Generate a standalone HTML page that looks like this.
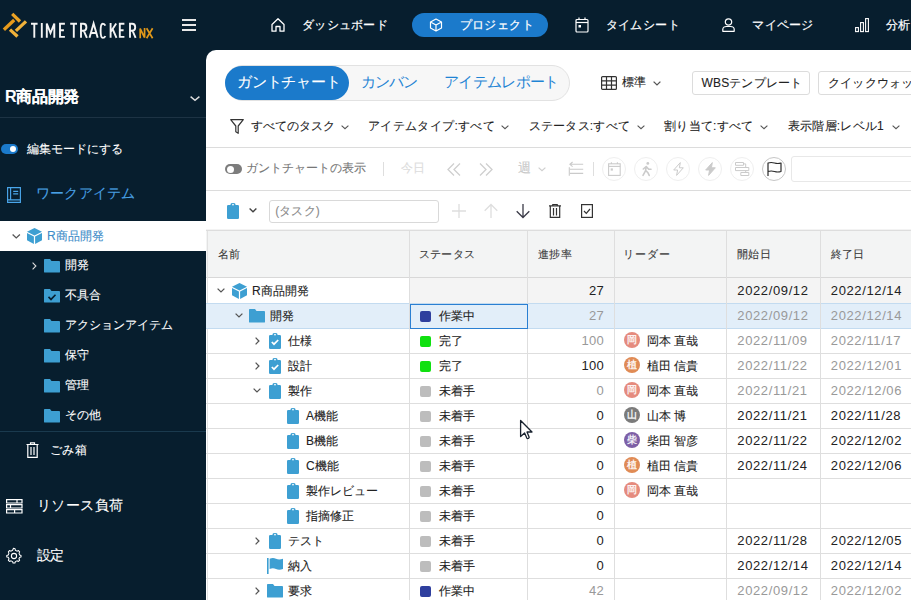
<!DOCTYPE html>
<html lang="ja">
<head>
<meta charset="utf-8">
<style>
*{box-sizing:border-box;margin:0;padding:0}
html,body{width:911px;height:600px;overflow:hidden;background:#071e2e;font-family:"Liberation Sans",sans-serif;color:#222}
.a{position:absolute;white-space:nowrap;line-height:20px;-webkit-text-stroke:0.1px currentColor}
svg{position:absolute;overflow:visible}
.b{position:absolute}
</style>
</head>
<body>

<svg style="left:0;top:0" width="160" height="45" viewBox="0 0 160 45">
<g stroke-width="3.3" stroke-linecap="butt">
<line x1="12.2" y1="13.9" x2="20.0" y2="21.5" stroke="#eba324"/>
<line x1="3.9" y1="29.7" x2="14.2" y2="20.0" stroke="#e69a1c"/>
<line x1="15.9" y1="30.9" x2="26.0" y2="21.4" stroke="#f0b23a"/>
<line x1="10.0" y1="29.6" x2="17.5" y2="36.5" stroke="#f0b23a"/>
</g>
<g fill="none" stroke="#f4f4f4" stroke-width="1.9" stroke-linejoin="miter">
<path d="M31 23.8 H37.6 M34.3 23.8 V37.8"/>
<path d="M41.8 23 V37.8"/>
<path d="M46.8 37.8 V23.6 L50.5 33 L54.3 23.6 V37.8"/>
<path d="M64.9 23.8 H60 V36.9 H64.9 M60 30.2 H63.9"/>
<path d="M70.2 23.8 H77 M73.8 23.8 V37.8"/>
<path d="M81 37.8 V23.8 H83.4 Q86.4 23.8 86.4 27.3 Q86.4 30.8 83.4 30.8 H81 M83.8 30.8 L86.9 37.8"/>
<path d="M89.5 37.8 L93.6 23.4 L97.7 37.8 M90.8 33 H96.4"/>
<path d="M105.3 25.6 Q104.6 23.7 102.8 23.7 Q100.6 23.7 100.6 30.8 Q100.6 37.9 102.8 37.9 Q104.6 37.9 105.3 36"/>
<path d="M110.6 23 V37.8 M116.2 23.4 L110.6 32 M112.6 29 L116.5 37.8"/>
<path d="M124.4 23.8 H119.8 V36.9 H124.4 M119.8 30.2 H123.6"/>
<path d="M130 37.8 V23.8 H132.2 Q135.2 23.8 135.2 27.3 Q135.2 30.8 132.2 30.8 H130 M132.6 30.8 L135.6 37.8"/>
</g>
<g fill="none" stroke="#e0981a" stroke-width="1.7">
<path d="M140.2 38.2 V28.6 L144.6 37.6 V28"/>
<path d="M146.6 28.2 L152.6 38.2 M152.6 28.2 L146.6 38.2"/>
</g>
</svg>
<div class="b" style="left:182px;top:19px;width:14px;height:2px;background:#e8e8e8"></div>
<div class="b" style="left:182px;top:24px;width:14px;height:2px;background:#e8e8e8"></div>
<div class="b" style="left:182px;top:29px;width:14px;height:2px;background:#e8e8e8"></div>
<svg style="left:271px;top:18px" width="14" height="14" viewBox="0 0 14 14"><path d="M1 6.5 L7 0.8 L13 6.5 V13.2 H9 V8.5 H5 V13.2 H1 Z" fill="none" stroke="#fff" stroke-width="1.3" stroke-linejoin="round"/></svg>
<div class="a" style="left:302.0px;top:15.3px;font-size:12px;color:#fff;letter-spacing:0.25px;font-weight:normal;-webkit-text-stroke:0.2px #fff">ダッシュボード</div>
<div class="b" style="left:412px;top:13px;width:136px;height:24px;border-radius:12px;background:#1b7acb"></div>
<svg style="left:429px;top:18px" width="14" height="14" viewBox="0 0 14 14"><path d="M7 1 L12.5 4 V10 L7 13 L1.5 10 V4 Z M1.5 4 L7 7 L12.5 4 M7 7 V13" fill="none" stroke="#fff" stroke-width="1.2" stroke-linejoin="round"/></svg>
<div class="a" style="left:459.5px;top:15.3px;font-size:12px;color:#fff;letter-spacing:0.45px;font-weight:normal;-webkit-text-stroke:0.2px #fff">プロジェクト</div>
<svg style="left:575px;top:17px" width="14" height="16" viewBox="0 0 14 16"><rect x="1" y="2.5" width="12" height="12.5" rx="1" fill="none" stroke="#fff" stroke-width="1.2"/><line x1="1" y1="5.5" x2="13" y2="5.5" stroke="#fff" stroke-width="1.2"/><line x1="4" y1="0.5" x2="4" y2="3" stroke="#fff" stroke-width="1.2"/><line x1="10" y1="0.5" x2="10" y2="3" stroke="#fff" stroke-width="1.2"/><rect x="3.5" y="8" width="2.5" height="2.5" fill="#fff"/></svg>
<div class="a" style="left:605.5px;top:15.3px;font-size:12px;color:#fff;letter-spacing:0.45px;font-weight:normal;-webkit-text-stroke:0.2px #fff">タイムシート</div>
<svg style="left:722px;top:18px" width="13" height="14" viewBox="0 0 13 14"><circle cx="6.5" cy="4" r="3.2" fill="none" stroke="#fff" stroke-width="1.2"/><path d="M0.8 13.3 V11.5 C0.8 9.5 2.5 8.5 4.5 8.5 H8.5 C10.5 8.5 12.2 9.5 12.2 11.5 V13.3 Z" fill="none" stroke="#fff" stroke-width="1.2" stroke-linejoin="round"/></svg>
<div class="a" style="left:752.3px;top:15.3px;font-size:12px;color:#fff;letter-spacing:0.3px;font-weight:normal;-webkit-text-stroke:0.2px #fff">マイページ</div>
<svg style="left:855px;top:18px" width="15" height="15" viewBox="0 0 15 15"><rect x="0.6" y="9.6" width="2.8" height="4" fill="none" stroke="#fff" stroke-width="1.1"/><rect x="5.6" y="4.6" width="2.8" height="9" fill="none" stroke="#fff" stroke-width="1.1"/><rect x="10.6" y="0.6" width="2.8" height="13" fill="none" stroke="#fff" stroke-width="1.1"/></svg>
<div class="a" style="left:886.0px;top:15.3px;font-size:12px;color:#fff;letter-spacing:0px;font-weight:normal;-webkit-text-stroke:0.2px #fff">分析</div>
<div class="a" style="left:5px;top:87px;font-size:16px;color:#fff;letter-spacing:-0.3px;font-weight:bold;">R商品開発</div>
<svg style="left:190px;top:95.5px" width="10" height="5" viewBox="0 0 10 5"><path d="M0.6 0.6 L5.0 4.4 L9.4 0.6" fill="none" stroke="#ddd" stroke-width="1.4"/></svg>
<div class="b" style="left:0;top:117px;width:206px;height:1px;background:#1d3344"></div>
<div class="b" style="left:1px;top:144px;width:17px;height:10px;border-radius:5px;background:#1b7acb"></div>
<div class="b" style="left:10px;top:146px;width:6px;height:6px;border-radius:3px;background:#fff"></div>
<div class="a" style="left:27px;top:138.6px;font-size:12px;color:#fff;letter-spacing:-0.05px;font-weight:normal;">編集モードにする</div>
<svg style="left:7px;top:187px" width="15" height="16" viewBox="0 0 15 16"><path d="M0.6 0.6 H13.4 V15.4 H0.6 Z M3.6 0.6 V12.8 M0.6 12.8 H13.4 M6.2 4.3 H11.2 M6.2 6.9 H11.2" fill="none" stroke="#4aa6ea" stroke-width="1.15"/></svg>
<div class="a" style="left:36px;top:183.2px;font-size:14px;color:#49a0e4;letter-spacing:0.2px;font-weight:normal;">ワークアイテム</div>
<div class="b" style="left:0;top:221px;width:206px;height:30px;background:#fff"></div>
<svg style="left:12px;top:234px" width="8.5" height="4.5" viewBox="0 0 8.5 4.5"><path d="M0.6 0.6 L4.25 3.9 L7.9 0.6" fill="none" stroke="#555" stroke-width="1.3"/></svg>
<svg style="left:26.5px;top:228px" width="15" height="16" viewBox="0 0 15 16"><path d="M7.5 0 L15 3.8 L7.5 7.6 L0 3.8 Z" fill="#3d9fd2"/><path d="M0 4.9 L6.9 8.5 V16 L0 12.3 Z" fill="#3d9fd2"/><path d="M15 4.9 L8.1 8.5 V16 L15 12.3 Z" fill="#3d9fd2"/></svg>
<div class="a" style="left:47px;top:226px;font-size:12px;color:#3d8cc8;letter-spacing:0.1px;font-weight:normal;">R商品開発</div>
<svg style="left:32px;top:262px" width="4.5" height="8" viewBox="0 0 4.5 8"><path d="M0.6 0.6 L3.9 4.0 L0.6 7.4" fill="none" stroke="#ddd" stroke-width="1.1"/></svg>
<svg style="left:44px;top:258.5px" width="16" height="13.6" viewBox="0 0 16 13" preserveAspectRatio="none"><path d="M0 0.8 Q0 0 0.8 0 H6 L7.5 2 H15.2 Q16 2 16 2.8 V12.2 Q16 13 15.2 13 H0.8 Q0 13 0 12.2 Z" fill="#3d9fd2"/></svg>
<div class="a" style="left:65px;top:255px;font-size:12px;color:#fff;letter-spacing:0px;font-weight:normal;">開発</div>
<svg style="left:44px;top:288.5px" width="16" height="13.6" viewBox="0 0 16 13" preserveAspectRatio="none"><path d="M0 0.8 Q0 0 0.8 0 H6 L7.5 2 H15.2 Q16 2 16 2.8 V12.2 Q16 13 15.2 13 H0.8 Q0 13 0 12.2 Z" fill="#3d9fd2"/><path d="M4.5 7.5 L7 10 L11.5 5.5" fill="none" stroke="#071e2e" stroke-width="1.6"/></svg>
<div class="a" style="left:65px;top:285px;font-size:12px;color:#fff;letter-spacing:0px;font-weight:normal;">不具合</div>
<svg style="left:44px;top:318.5px" width="16" height="13.6" viewBox="0 0 16 13" preserveAspectRatio="none"><path d="M0 0.8 Q0 0 0.8 0 H6 L7.5 2 H15.2 Q16 2 16 2.8 V12.2 Q16 13 15.2 13 H0.8 Q0 13 0 12.2 Z" fill="#3d9fd2"/></svg>
<div class="a" style="left:65px;top:315px;font-size:12px;color:#fff;letter-spacing:0px;font-weight:normal;">アクションアイテム</div>
<svg style="left:44px;top:348.5px" width="16" height="13.6" viewBox="0 0 16 13" preserveAspectRatio="none"><path d="M0 0.8 Q0 0 0.8 0 H6 L7.5 2 H15.2 Q16 2 16 2.8 V12.2 Q16 13 15.2 13 H0.8 Q0 13 0 12.2 Z" fill="#3d9fd2"/></svg>
<div class="a" style="left:65px;top:345px;font-size:12px;color:#fff;letter-spacing:0px;font-weight:normal;">保守</div>
<svg style="left:44px;top:378.5px" width="16" height="13.6" viewBox="0 0 16 13" preserveAspectRatio="none"><path d="M0 0.8 Q0 0 0.8 0 H6 L7.5 2 H15.2 Q16 2 16 2.8 V12.2 Q16 13 15.2 13 H0.8 Q0 13 0 12.2 Z" fill="#3d9fd2"/></svg>
<div class="a" style="left:65px;top:375px;font-size:12px;color:#fff;letter-spacing:0px;font-weight:normal;">管理</div>
<svg style="left:44px;top:408.5px" width="16" height="13.6" viewBox="0 0 16 13" preserveAspectRatio="none"><path d="M0 0.8 Q0 0 0.8 0 H6 L7.5 2 H15.2 Q16 2 16 2.8 V12.2 Q16 13 15.2 13 H0.8 Q0 13 0 12.2 Z" fill="#3d9fd2"/></svg>
<div class="a" style="left:65px;top:405px;font-size:12px;color:#fff;letter-spacing:0px;font-weight:normal;">その他</div>
<div class="b" style="left:0;top:431px;width:206px;height:1px;background:#1a3a4e"></div>
<svg style="left:26px;top:442px" width="13" height="16" viewBox="0 0 13 16"><path d="M0.5 2.5 H12.5 M4.5 2.5 V0.8 H8.5 V2.5 M1.8 2.5 V15.3 H11.2 V2.5 M5 5 V13 M8 5 V13" fill="none" stroke="#fff" stroke-width="1.2"/></svg>
<div class="a" style="left:50px;top:439.5px;font-size:12px;color:#fff;letter-spacing:0.3px;font-weight:normal;">ごみ箱</div>
<svg style="left:5.5px;top:498.5px" width="17" height="15" viewBox="0 0 17 15"><path d="M0.6 0.6 H16 V4 H0.6 Z M11 0.6 V4 M0.6 5.6 H16 V9 H0.6 Z M4.5 5.6 V9 M0.6 10.6 H16 V14 H0.6 Z M8.6 10.6 V14" fill="none" stroke="#fff" stroke-width="1.2"/></svg>
<div class="a" style="left:36.5px;top:494.5px;font-size:14px;color:#fff;letter-spacing:0.5px;font-weight:normal;">リソース負荷</div>
<svg style="left:6px;top:548px" width="16" height="16" viewBox="0 0 16 16"><path d="M8 0.8 L9.6 1.2 L10 3 L11.6 3.9 L13.3 3.3 L14.5 4.6 L13.9 6.3 L14.6 8 L16 8.5 V10 L14.4 10.5 L13.8 12 L14.5 13.6 L13.2 14.8 L11.6 14.2 L10 15 L9.5 16.5 H7.5 L7 15 L5.4 14.2 L3.8 14.8 L2.5 13.6 L3.2 12 L2.5 10.5 L0.8 10 V8.5 L2.4 8 L3.1 6.3 L2.5 4.6 L3.7 3.3 L5.4 3.9 L7 3 Z" transform="translate(0,-0.5) scale(0.94)" fill="none" stroke="#fff" stroke-width="1.1" stroke-linejoin="round"/><circle cx="8" cy="8" r="2.6" fill="none" stroke="#fff" stroke-width="1.1"/></svg>
<div class="a" style="left:36.5px;top:544.5px;font-size:14px;color:#fff;letter-spacing:-0.5px;font-weight:normal;">設定</div>
<div class="b" style="left:206px;top:50px;width:705px;height:550px;background:#fff;border-top-left-radius:10px"></div>
<div class="b" style="left:224.5px;top:65px;width:345px;height:35.5px;border-radius:18px;background:#f7f7f7;border:1px solid #e2e2e2"></div>
<div class="b" style="left:225px;top:66px;width:124px;height:34px;border-radius:17px;background:#1b7acb"></div>
<div class="a" style="left:237px;top:72.2px;font-size:15px;color:#fff;letter-spacing:-0.25px;font-weight:normal;">ガントチャート</div>
<div class="a" style="left:360.7px;top:72.2px;font-size:15px;color:#1f84d4;letter-spacing:-0.8px;font-weight:normal;-webkit-text-stroke:0">カンバン</div>
<div class="a" style="left:444px;top:72.2px;font-size:15px;color:#1f84d4;letter-spacing:-0.7px;font-weight:normal;-webkit-text-stroke:0">アイテムレポート</div>
<svg style="left:601px;top:76px" width="16" height="14" viewBox="0 0 16 14"><rect x="0.6" y="0.6" width="14.8" height="12.8" rx="1" fill="none" stroke="#333" stroke-width="1.2"/><path d="M5.5 0.6 V13.4 M10.5 0.6 V13.4 M0.6 4.9 H15.4 M0.6 9.1 H15.4" stroke="#333" stroke-width="1.2"/></svg>
<div class="a" style="left:622px;top:72.4px;font-size:12px;color:#222;letter-spacing:0.3px;font-weight:normal;">標準</div>
<svg style="left:653px;top:80.5px" width="8" height="4.5" viewBox="0 0 8 4.5"><path d="M0.6 0.6 L4.0 3.9 L7.4 0.6" fill="none" stroke="#555" stroke-width="1.3"/></svg>
<div class="b" style="left:692px;top:71px;width:118px;height:23.5px;border-radius:3px;border:1px solid #dcdcdc;background:#fff"></div>
<div class="a" style="left:701.5px;top:72.7px;font-size:12px;color:#222;letter-spacing:0.15px;font-weight:normal;">WBSテンプレート</div>
<div class="b" style="left:818px;top:71px;width:120px;height:23.5px;border-radius:3px;border:1px solid #dcdcdc;background:#fff"></div>
<div class="a" style="left:828px;top:72.7px;font-size:12px;color:#222;letter-spacing:0.2px;font-weight:normal;">クイックウォッチ</div>
<svg style="left:230px;top:119px" width="14" height="15" viewBox="0 0 14 15"><path d="M0.7 0.7 H13.3 L8.2 7 V14.3 L5.8 12.8 V7 Z" fill="none" stroke="#333" stroke-width="1.2" stroke-linejoin="round"/></svg>
<div class="a" style="left:250.5px;top:116.3px;font-size:12px;color:#222;letter-spacing:0.15px;font-weight:normal;">すべてのタスク</div>
<svg style="left:341px;top:124.7px" width="8" height="4.3" viewBox="0 0 8 4.3"><path d="M0.6 0.6 L4.0 3.6999999999999997 L7.4 0.6" fill="none" stroke="#555" stroke-width="1.1"/></svg>
<div class="a" style="left:368px;top:116.3px;font-size:12px;color:#222;letter-spacing:0.35px;font-weight:normal;">アイテムタイプ:すべて</div>
<svg style="left:501px;top:124.7px" width="8" height="4.3" viewBox="0 0 8 4.3"><path d="M0.6 0.6 L4.0 3.6999999999999997 L7.4 0.6" fill="none" stroke="#555" stroke-width="1.1"/></svg>
<div class="a" style="left:528.5px;top:116.3px;font-size:12px;color:#222;letter-spacing:0.25px;font-weight:normal;">ステータス:すべて</div>
<svg style="left:636.5px;top:124.7px" width="8" height="4.3" viewBox="0 0 8 4.3"><path d="M0.6 0.6 L4.0 3.6999999999999997 L7.4 0.6" fill="none" stroke="#555" stroke-width="1.1"/></svg>
<div class="a" style="left:664px;top:116.3px;font-size:12px;color:#222;letter-spacing:0.25px;font-weight:normal;">割り当て:すべて</div>
<svg style="left:760px;top:124.7px" width="8" height="4.3" viewBox="0 0 8 4.3"><path d="M0.6 0.6 L4.0 3.6999999999999997 L7.4 0.6" fill="none" stroke="#555" stroke-width="1.1"/></svg>
<div class="a" style="left:788px;top:116.3px;font-size:12px;color:#222;letter-spacing:0.2px;font-weight:normal;">表示階層:レベル1</div>
<svg style="left:892px;top:124.7px" width="8" height="4.3" viewBox="0 0 8 4.3"><path d="M0.6 0.6 L4.0 3.6999999999999997 L7.4 0.6" fill="none" stroke="#555" stroke-width="1.1"/></svg>
<div class="b" style="left:206px;top:147px;width:705px;height:1px;background:#dcdcdc"></div>
<div class="b" style="left:225px;top:164px;width:16.5px;height:10px;border-radius:5px;background:#7d7d7d"></div>
<div class="b" style="left:226.5px;top:165.5px;width:7px;height:7px;border-radius:4px;background:#fff"></div>
<div class="a" style="left:246.3px;top:158.2px;font-size:12px;color:#777;letter-spacing:0px;font-weight:normal;">ガントチャートの表示</div>
<div class="b" style="left:383px;top:162px;width:1px;height:14px;background:#dedede"></div>
<div class="a" style="left:401px;top:158.2px;font-size:12px;color:#dcdcdc;letter-spacing:0.2px;font-weight:normal;">今日</div>
<svg style="left:447px;top:163px" width="14" height="13" viewBox="0 0 14 13"><path d="M7 0.5 L1 6.5 L7 12.5 M13 0.5 L7 6.5 L13 12.5" fill="none" stroke="#cfcfcf" stroke-width="1.3"/></svg>
<svg style="left:479px;top:163px" width="14" height="13" viewBox="0 0 14 13"><path d="M1 0.5 L7 6.5 L1 12.5 M7 0.5 L13 6.5 L7 12.5" fill="none" stroke="#cfcfcf" stroke-width="1.3"/></svg>
<div class="a" style="left:518px;top:158px;font-size:13px;color:#c8c8c8;letter-spacing:0px;font-weight:normal;">週</div>
<svg style="left:538px;top:166.5px" width="8" height="4.3" viewBox="0 0 8 4.3"><path d="M0.6 0.6 L4.0 3.6999999999999997 L7.4 0.6" fill="none" stroke="#cfcfcf" stroke-width="1.2"/></svg>
<svg style="left:568px;top:162px" width="16" height="14" viewBox="0 0 16 14"><path d="M4.6 0 L1.9 2.3 L4.6 4.6 M2 2.3 H15.2 M1.3 5.3 V13.7 M2 7.3 H15.2 M2 11.4 H15.2" fill="none" stroke="#cacaca" stroke-width="1.1"/></svg>
<div class="b" style="left:593px;top:162px;width:1px;height:14px;background:#dedede"></div>
<div class="b" style="left:602px;top:157px;width:24px;height:24px;border-radius:12px;border:1px solid #efefef;background:#fff"></div>
<div class="b" style="left:634px;top:157px;width:24px;height:24px;border-radius:12px;border:1px solid #efefef;background:#fff"></div>
<div class="b" style="left:666px;top:157px;width:24px;height:24px;border-radius:12px;border:1px solid #efefef;background:#fff"></div>
<div class="b" style="left:698px;top:157px;width:24px;height:24px;border-radius:12px;border:1px solid #efefef;background:#fff"></div>
<div class="b" style="left:730px;top:157px;width:24px;height:24px;border-radius:12px;border:1px solid #efefef;background:#fff"></div>
<div class="b" style="left:762px;top:157px;width:24px;height:24px;border-radius:12px;border:1px solid #c6c6c6;background:#fff"></div>
<svg style="left:607.5px;top:162px" width="13" height="14" viewBox="0 0 13 14"><rect x="0.6" y="1.8" width="11.6" height="11.6" fill="none" stroke="#cbcbcb" stroke-width="1.1"/><line x1="0.6" y1="4.4" x2="12.2" y2="4.4" stroke="#cbcbcb" stroke-width="1.1"/><line x1="3.4" y1="0.3" x2="3.4" y2="2" stroke="#cbcbcb" stroke-width="1.1"/><line x1="9.4" y1="0.3" x2="9.4" y2="2" stroke="#cbcbcb" stroke-width="1.1"/><rect x="2.7" y="6.4" width="2.2" height="2.2" fill="#cbcbcb"/></svg>
<svg style="left:641.5px;top:162px" width="10" height="14" viewBox="0 0 10 14"><circle cx="5.8" cy="1.4" r="1.4" fill="#cbcbcb"/><path d="M1 13.3 L3.5 8.8 L4.2 4.5 L1.3 7 M4.2 4.5 L6.7 7.3 H9 M3.8 8.6 L6 10.8 L7.2 13.4" fill="none" stroke="#cbcbcb" stroke-width="1.6" stroke-linecap="round" stroke-linejoin="round"/></svg>
<svg style="left:672.5px;top:162px" width="11" height="14" viewBox="0 0 11 14"><path d="M7.3 0.6 L0.7 8 H4.6 L3.6 13.4 L10.3 5.8 H6.4 Z" fill="none" stroke="#cbcbcb" stroke-width="1" stroke-linejoin="round"/></svg>
<svg style="left:704.5px;top:162px" width="11" height="14" viewBox="0 0 11 14"><path d="M7.3 0.6 L0.7 8 H4.6 L3.6 13.4 L10.3 5.8 H6.4 Z" fill="#cbcbcb" stroke="#cbcbcb" stroke-width="1" stroke-linejoin="round"/></svg>
<svg style="left:735px;top:162px" width="15" height="14" viewBox="0 0 15 14"><path d="M0.5 0.5 H8.5 V3.3 H0.5 Z M0.5 5.5 H13.8 V8.6 H0.5 Z M5.8 10.5 H13.8 V13.5 H5.8 Z M8.5 1.9 H10.7 V5.5 M10.7 8.6 V10.5" fill="none" stroke="#cbcbcb" stroke-width="1"/></svg>
<svg style="left:767px;top:162px" width="15" height="14" viewBox="0 0 15 14"><path d="M1 14 V1 Q4.2 0 7.5 1 Q10.8 2 14 1 V9.5 Q10.8 10.5 7.5 9.5 Q4.2 8.5 1 9.5" fill="none" stroke="#2a2a2a" stroke-width="1.2" stroke-linejoin="round"/></svg>
<div class="b" style="left:791px;top:156px;width:150px;height:26px;border-radius:3px;border:1px solid #e8e8e8;background:#fff"></div>
<div class="b" style="left:206px;top:190px;width:705px;height:1px;background:#dcdcdc"></div>
<svg style="left:227px;top:203px" width="12" height="16" viewBox="0 0 12 16"><path d="M1.2 2 H3.5 V1.5 Q3.5 0 5 0 H7 Q8.5 0 8.5 1.5 V2 H10.8 Q12 2 12 3.2 V14.8 Q12 16 10.8 16 H1.2 Q0 16 0 14.8 V3.2 Q0 2 1.2 2 Z" fill="#3d9fd2"/><circle cx="6" cy="1.6" r="0.9" fill="#fff"/></svg>
<svg style="left:249px;top:208.3px" width="8" height="4.3" viewBox="0 0 8 4.3"><path d="M0.6 0.6 L4.0 3.6999999999999997 L7.4 0.6" fill="none" stroke="#444" stroke-width="1.4"/></svg>
<div class="b" style="left:269px;top:199.5px;width:170px;height:23px;border-radius:3px;border:1px solid #d9d9d9;background:#fff"></div>
<div class="a" style="left:275.3px;top:201px;font-size:12px;color:#8a8a8a;letter-spacing:0.1px;font-weight:normal;">(タスク)</div>
<svg style="left:452px;top:204px" width="14" height="14" viewBox="0 0 14 14"><path d="M7 0 V14 M0 7 H14" stroke="#dedede" stroke-width="1.3"/></svg>
<svg style="left:484px;top:204px" width="14" height="14" viewBox="0 0 14 14"><path d="M7 0.5 V14 M0.7 6.8 L7 0.5 L13.3 6.8" fill="none" stroke="#dedede" stroke-width="1.3"/></svg>
<svg style="left:516px;top:204px" width="14" height="14" viewBox="0 0 14 14"><path d="M7 0 V13.5 M0.7 7.2 L7 13.5 L13.3 7.2" fill="none" stroke="#3b3b48" stroke-width="1.3"/></svg>
<svg style="left:549px;top:204px" width="12" height="14" viewBox="0 0 12 14"><path d="M0 1.8 H12 M3.8 1.8 V0.5 H8.2 V1.8 M1.3 1.8 V13.4 H10.7 V1.8 M4.5 4 V11.5 M7.5 4 V11.5" fill="none" stroke="#333" stroke-width="1.2"/></svg>
<svg style="left:581px;top:204px" width="12" height="14" viewBox="0 0 12 14"><rect x="0.6" y="0.6" width="10.8" height="12.8" fill="none" stroke="#333" stroke-width="1.2"/><path d="M3 7 L5.3 9.3 L9 5" fill="none" stroke="#333" stroke-width="1.2"/></svg>
<div class="b" style="left:206px;top:229px;width:705px;height:1px;background:#f3f3f3"></div>
<div class="b" style="left:206px;top:230px;width:705px;height:1px;background:#dddddd"></div>
<div class="b" style="left:206px;top:231px;width:705px;height:46px;background:#f3f4f4"></div>
<div class="b" style="left:206px;top:276.5px;width:705px;height:1.5px;background:#d8d8d8"></div>
<div class="b" style="left:207px;top:231px;width:1px;height:369px;background:#e2e2e2"></div>
<div class="a" style="left:218px;top:243.6px;font-size:11px;color:#3a3a3a;letter-spacing:0.1px;font-weight:normal;-webkit-text-stroke:0.1px #3a3a3a">名前</div>
<div class="a" style="left:418.5px;top:243.6px;font-size:11px;color:#3a3a3a;letter-spacing:0.45px;font-weight:normal;-webkit-text-stroke:0.1px #3a3a3a">ステータス</div>
<div class="a" style="left:537.5px;top:243.6px;font-size:11px;color:#3a3a3a;letter-spacing:0.75px;font-weight:normal;-webkit-text-stroke:0.1px #3a3a3a">進捗率</div>
<div class="a" style="left:622.5px;top:243.6px;font-size:11px;color:#3a3a3a;letter-spacing:1.0px;font-weight:normal;-webkit-text-stroke:0.1px #3a3a3a">リーダー</div>
<div class="a" style="left:737px;top:243.6px;font-size:11px;color:#3a3a3a;letter-spacing:0.4px;font-weight:normal;-webkit-text-stroke:0.1px #3a3a3a">開始日</div>
<div class="a" style="left:830.5px;top:243.6px;font-size:11px;color:#3a3a3a;letter-spacing:0.4px;font-weight:normal;-webkit-text-stroke:0.1px #3a3a3a">終了日</div>
<div class="b" style="left:409.5px;top:278px;width:502px;height:25px;background:#f4f4f4"></div>
<div class="b" style="left:206px;top:303px;width:705px;height:1px;background:#c3dbf0"></div>
<svg style="left:217px;top:288.2px" width="8" height="4.5" viewBox="0 0 8 4.5"><path d="M0.6 0.6 L4.0 3.9 L7.4 0.6" fill="none" stroke="#555" stroke-width="1.3"/></svg>
<svg style="left:231.5px;top:283.0px" width="15" height="16" viewBox="0 0 15 16"><path d="M7.5 0 L15 3.8 L7.5 7.6 L0 3.8 Z" fill="#3d9fd2"/><path d="M0 4.9 L6.9 8.5 V16 L0 12.3 Z" fill="#3d9fd2"/><path d="M15 4.9 L8.1 8.5 V16 L15 12.3 Z" fill="#3d9fd2"/></svg>
<div class="a" style="left:252px;top:280.8px;font-size:12px;color:#222;letter-spacing:0px;font-weight:normal;">R商品開発</div>
<div class="a" style="left:530px;top:280.5px;width:74px;text-align:right;font-size:13px;color:#222;letter-spacing:0.3px;-webkit-text-stroke:0">27</div>
<div class="a" style="left:737.3px;top:280.5px;font-size:13px;color:#222;letter-spacing:0.62px;font-weight:normal;-webkit-text-stroke:0">2022/09/12</div>
<div class="a" style="left:830.8px;top:280.5px;font-size:13px;color:#222;letter-spacing:0.62px;font-weight:normal;-webkit-text-stroke:0">2022/12/14</div>
<div class="b" style="left:206px;top:303px;width:705px;height:25px;background:#e2eef9"></div>
<div class="b" style="left:206px;top:328px;width:705px;height:1px;background:#c3dbf0"></div>
<svg style="left:235px;top:313.2px" width="8" height="4.5" viewBox="0 0 8 4.5"><path d="M0.6 0.6 L4.0 3.9 L7.4 0.6" fill="none" stroke="#555" stroke-width="1.3"/></svg>
<svg style="left:249px;top:309.0px" width="16" height="13.6" viewBox="0 0 16 13" preserveAspectRatio="none"><path d="M0 0.8 Q0 0 0.8 0 H6 L7.5 2 H15.2 Q16 2 16 2.8 V12.2 Q16 13 15.2 13 H0.8 Q0 13 0 12.2 Z" fill="#3d9fd2"/></svg>
<div class="a" style="left:270px;top:305.8px;font-size:12px;color:#222;letter-spacing:0px;font-weight:normal;">開発</div>
<div class="b" style="left:420px;top:310.7px;width:11px;height:11px;border-radius:2px;background:#2f3f9e"></div>
<div class="a" style="left:439px;top:305.8px;font-size:12px;color:#222;letter-spacing:0px;font-weight:normal;">作業中</div>
<div class="a" style="left:530px;top:305.5px;width:74px;text-align:right;font-size:13px;color:#999;letter-spacing:0.3px;-webkit-text-stroke:0">27</div>
<div class="a" style="left:737.3px;top:305.5px;font-size:13px;color:#999;letter-spacing:0.62px;font-weight:normal;-webkit-text-stroke:0">2022/09/12</div>
<div class="a" style="left:830.8px;top:305.5px;font-size:13px;color:#999;letter-spacing:0.62px;font-weight:normal;-webkit-text-stroke:0">2022/12/14</div>
<div class="b" style="left:206px;top:353px;width:705px;height:1px;background:#dedede"></div>
<svg style="left:254.7px;top:336.5px" width="4.5" height="8" viewBox="0 0 4.5 8"><path d="M0.6 0.6 L3.9 4.0 L0.6 7.4" fill="none" stroke="#555" stroke-width="1.3"/></svg>
<svg style="left:269px;top:333.0px" width="12" height="16" viewBox="0 0 12 16"><path d="M1.2 2 H3.5 V1.5 Q3.5 0 5 0 H7 Q8.5 0 8.5 1.5 V2 H10.8 Q12 2 12 3.2 V14.8 Q12 16 10.8 16 H1.2 Q0 16 0 14.8 V3.2 Q0 2 1.2 2 Z" fill="#3d9fd2"/><circle cx="6" cy="1.6" r="0.9" fill="#fff"/><path d="M2.8 9 L5 11.2 L9.2 7" fill="none" stroke="#fff" stroke-width="1.7"/></svg>
<div class="a" style="left:288px;top:330.8px;font-size:12px;color:#222;letter-spacing:0px;font-weight:normal;">仕様</div>
<div class="b" style="left:420px;top:335.7px;width:11px;height:11px;border-radius:2px;background:#10e010"></div>
<div class="a" style="left:439px;top:330.8px;font-size:12px;color:#222;letter-spacing:0px;font-weight:normal;">完了</div>
<div class="a" style="left:530px;top:330.5px;width:74px;text-align:right;font-size:13px;color:#999;letter-spacing:0.3px;-webkit-text-stroke:0">100</div>
<div class="b" style="left:624px;top:331.7px;width:16px;height:16px;border-radius:8px;background:#e58b7e"></div>
<div class="a" style="left:624px;top:332.7px;width:16px;height:14px;line-height:14px;text-align:center;font-size:10px;font-weight:bold;color:#fff;-webkit-text-stroke:0;opacity:0.9">岡</div>
<div class="a" style="left:647px;top:330.8px;font-size:12px;color:#222;letter-spacing:0px;font-weight:normal;">岡本 直哉</div>
<div class="a" style="left:737.3px;top:330.5px;font-size:13px;color:#999;letter-spacing:0.62px;font-weight:normal;-webkit-text-stroke:0">2022/11/09</div>
<div class="a" style="left:830.8px;top:330.5px;font-size:13px;color:#999;letter-spacing:0.62px;font-weight:normal;-webkit-text-stroke:0">2022/11/17</div>
<div class="b" style="left:206px;top:378px;width:705px;height:1px;background:#dedede"></div>
<svg style="left:254.7px;top:361.5px" width="4.5" height="8" viewBox="0 0 4.5 8"><path d="M0.6 0.6 L3.9 4.0 L0.6 7.4" fill="none" stroke="#555" stroke-width="1.3"/></svg>
<svg style="left:269px;top:358.0px" width="12" height="16" viewBox="0 0 12 16"><path d="M1.2 2 H3.5 V1.5 Q3.5 0 5 0 H7 Q8.5 0 8.5 1.5 V2 H10.8 Q12 2 12 3.2 V14.8 Q12 16 10.8 16 H1.2 Q0 16 0 14.8 V3.2 Q0 2 1.2 2 Z" fill="#3d9fd2"/><circle cx="6" cy="1.6" r="0.9" fill="#fff"/><path d="M2.8 9 L5 11.2 L9.2 7" fill="none" stroke="#fff" stroke-width="1.7"/></svg>
<div class="a" style="left:288px;top:355.8px;font-size:12px;color:#222;letter-spacing:0px;font-weight:normal;">設計</div>
<div class="b" style="left:420px;top:360.7px;width:11px;height:11px;border-radius:2px;background:#10e010"></div>
<div class="a" style="left:439px;top:355.8px;font-size:12px;color:#222;letter-spacing:0px;font-weight:normal;">完了</div>
<div class="a" style="left:530px;top:355.5px;width:74px;text-align:right;font-size:13px;color:#222;letter-spacing:0.3px;-webkit-text-stroke:0">100</div>
<div class="b" style="left:624px;top:356.7px;width:16px;height:16px;border-radius:8px;background:#e08b55"></div>
<div class="a" style="left:624px;top:357.7px;width:16px;height:14px;line-height:14px;text-align:center;font-size:10px;font-weight:bold;color:#fff;-webkit-text-stroke:0;opacity:0.9">植</div>
<div class="a" style="left:647px;top:355.8px;font-size:12px;color:#222;letter-spacing:0px;font-weight:normal;">植田 信貴</div>
<div class="a" style="left:737.3px;top:355.5px;font-size:13px;color:#999;letter-spacing:0.62px;font-weight:normal;-webkit-text-stroke:0">2022/11/22</div>
<div class="a" style="left:830.8px;top:355.5px;font-size:13px;color:#999;letter-spacing:0.62px;font-weight:normal;-webkit-text-stroke:0">2022/12/01</div>
<div class="b" style="left:206px;top:403px;width:705px;height:1px;background:#dedede"></div>
<svg style="left:253px;top:388.2px" width="8" height="4.5" viewBox="0 0 8 4.5"><path d="M0.6 0.6 L4.0 3.9 L7.4 0.6" fill="none" stroke="#555" stroke-width="1.3"/></svg>
<svg style="left:269px;top:383.0px" width="12" height="16" viewBox="0 0 12 16"><path d="M1.2 2 H3.5 V1.5 Q3.5 0 5 0 H7 Q8.5 0 8.5 1.5 V2 H10.8 Q12 2 12 3.2 V14.8 Q12 16 10.8 16 H1.2 Q0 16 0 14.8 V3.2 Q0 2 1.2 2 Z" fill="#3d9fd2"/><circle cx="6" cy="1.6" r="0.9" fill="#fff"/></svg>
<div class="a" style="left:288px;top:380.8px;font-size:12px;color:#222;letter-spacing:0px;font-weight:normal;">製作</div>
<div class="b" style="left:420px;top:385.7px;width:11px;height:11px;border-radius:2px;background:#bdbdbd"></div>
<div class="a" style="left:439px;top:380.8px;font-size:12px;color:#222;letter-spacing:0px;font-weight:normal;">未着手</div>
<div class="a" style="left:530px;top:380.5px;width:74px;text-align:right;font-size:13px;color:#999;letter-spacing:0.3px;-webkit-text-stroke:0">0</div>
<div class="b" style="left:624px;top:381.7px;width:16px;height:16px;border-radius:8px;background:#e58b7e"></div>
<div class="a" style="left:624px;top:382.7px;width:16px;height:14px;line-height:14px;text-align:center;font-size:10px;font-weight:bold;color:#fff;-webkit-text-stroke:0;opacity:0.9">岡</div>
<div class="a" style="left:647px;top:380.8px;font-size:12px;color:#222;letter-spacing:0px;font-weight:normal;">岡本 直哉</div>
<div class="a" style="left:737.3px;top:380.5px;font-size:13px;color:#999;letter-spacing:0.62px;font-weight:normal;-webkit-text-stroke:0">2022/11/21</div>
<div class="a" style="left:830.8px;top:380.5px;font-size:13px;color:#999;letter-spacing:0.62px;font-weight:normal;-webkit-text-stroke:0">2022/12/06</div>
<div class="b" style="left:206px;top:428px;width:705px;height:1px;background:#dedede"></div>
<svg style="left:287px;top:408.0px" width="12" height="16" viewBox="0 0 12 16"><path d="M1.2 2 H3.5 V1.5 Q3.5 0 5 0 H7 Q8.5 0 8.5 1.5 V2 H10.8 Q12 2 12 3.2 V14.8 Q12 16 10.8 16 H1.2 Q0 16 0 14.8 V3.2 Q0 2 1.2 2 Z" fill="#3d9fd2"/><circle cx="6" cy="1.6" r="0.9" fill="#fff"/></svg>
<div class="a" style="left:306px;top:405.8px;font-size:12px;color:#222;letter-spacing:0px;font-weight:normal;">A機能</div>
<div class="b" style="left:420px;top:410.7px;width:11px;height:11px;border-radius:2px;background:#bdbdbd"></div>
<div class="a" style="left:439px;top:405.8px;font-size:12px;color:#222;letter-spacing:0px;font-weight:normal;">未着手</div>
<div class="a" style="left:530px;top:405.5px;width:74px;text-align:right;font-size:13px;color:#222;letter-spacing:0.3px;-webkit-text-stroke:0">0</div>
<div class="b" style="left:624px;top:406.7px;width:16px;height:16px;border-radius:8px;background:#7b7b7b"></div>
<div class="a" style="left:624px;top:407.7px;width:16px;height:14px;line-height:14px;text-align:center;font-size:10px;font-weight:bold;color:#fff;-webkit-text-stroke:0;opacity:0.9">山</div>
<div class="a" style="left:647px;top:405.8px;font-size:12px;color:#222;letter-spacing:0px;font-weight:normal;">山本 博</div>
<div class="a" style="left:737.3px;top:405.5px;font-size:13px;color:#222;letter-spacing:0.62px;font-weight:normal;-webkit-text-stroke:0">2022/11/21</div>
<div class="a" style="left:830.8px;top:405.5px;font-size:13px;color:#222;letter-spacing:0.62px;font-weight:normal;-webkit-text-stroke:0">2022/11/28</div>
<div class="b" style="left:206px;top:453px;width:705px;height:1px;background:#dedede"></div>
<svg style="left:287px;top:433.0px" width="12" height="16" viewBox="0 0 12 16"><path d="M1.2 2 H3.5 V1.5 Q3.5 0 5 0 H7 Q8.5 0 8.5 1.5 V2 H10.8 Q12 2 12 3.2 V14.8 Q12 16 10.8 16 H1.2 Q0 16 0 14.8 V3.2 Q0 2 1.2 2 Z" fill="#3d9fd2"/><circle cx="6" cy="1.6" r="0.9" fill="#fff"/></svg>
<div class="a" style="left:306px;top:430.8px;font-size:12px;color:#222;letter-spacing:0px;font-weight:normal;">B機能</div>
<div class="b" style="left:420px;top:435.7px;width:11px;height:11px;border-radius:2px;background:#bdbdbd"></div>
<div class="a" style="left:439px;top:430.8px;font-size:12px;color:#222;letter-spacing:0px;font-weight:normal;">未着手</div>
<div class="a" style="left:530px;top:430.5px;width:74px;text-align:right;font-size:13px;color:#222;letter-spacing:0.3px;-webkit-text-stroke:0">0</div>
<div class="b" style="left:624px;top:431.7px;width:16px;height:16px;border-radius:8px;background:#7d5fa6"></div>
<div class="a" style="left:624px;top:432.7px;width:16px;height:14px;line-height:14px;text-align:center;font-size:10px;font-weight:bold;color:#fff;-webkit-text-stroke:0;opacity:0.9">柴</div>
<div class="a" style="left:647px;top:430.8px;font-size:12px;color:#222;letter-spacing:0px;font-weight:normal;">柴田 智彦</div>
<div class="a" style="left:737.3px;top:430.5px;font-size:13px;color:#222;letter-spacing:0.62px;font-weight:normal;-webkit-text-stroke:0">2022/11/22</div>
<div class="a" style="left:830.8px;top:430.5px;font-size:13px;color:#222;letter-spacing:0.62px;font-weight:normal;-webkit-text-stroke:0">2022/12/02</div>
<div class="b" style="left:206px;top:478px;width:705px;height:1px;background:#dedede"></div>
<svg style="left:287px;top:458.0px" width="12" height="16" viewBox="0 0 12 16"><path d="M1.2 2 H3.5 V1.5 Q3.5 0 5 0 H7 Q8.5 0 8.5 1.5 V2 H10.8 Q12 2 12 3.2 V14.8 Q12 16 10.8 16 H1.2 Q0 16 0 14.8 V3.2 Q0 2 1.2 2 Z" fill="#3d9fd2"/><circle cx="6" cy="1.6" r="0.9" fill="#fff"/></svg>
<div class="a" style="left:306px;top:455.8px;font-size:12px;color:#222;letter-spacing:0px;font-weight:normal;">C機能</div>
<div class="b" style="left:420px;top:460.7px;width:11px;height:11px;border-radius:2px;background:#bdbdbd"></div>
<div class="a" style="left:439px;top:455.8px;font-size:12px;color:#222;letter-spacing:0px;font-weight:normal;">未着手</div>
<div class="a" style="left:530px;top:455.5px;width:74px;text-align:right;font-size:13px;color:#222;letter-spacing:0.3px;-webkit-text-stroke:0">0</div>
<div class="b" style="left:624px;top:456.7px;width:16px;height:16px;border-radius:8px;background:#e08b55"></div>
<div class="a" style="left:624px;top:457.7px;width:16px;height:14px;line-height:14px;text-align:center;font-size:10px;font-weight:bold;color:#fff;-webkit-text-stroke:0;opacity:0.9">植</div>
<div class="a" style="left:647px;top:455.8px;font-size:12px;color:#222;letter-spacing:0px;font-weight:normal;">植田 信貴</div>
<div class="a" style="left:737.3px;top:455.5px;font-size:13px;color:#222;letter-spacing:0.62px;font-weight:normal;-webkit-text-stroke:0">2022/11/24</div>
<div class="a" style="left:830.8px;top:455.5px;font-size:13px;color:#222;letter-spacing:0.62px;font-weight:normal;-webkit-text-stroke:0">2022/12/06</div>
<div class="b" style="left:206px;top:503px;width:705px;height:1px;background:#dedede"></div>
<svg style="left:287px;top:483.0px" width="12" height="16" viewBox="0 0 12 16"><path d="M1.2 2 H3.5 V1.5 Q3.5 0 5 0 H7 Q8.5 0 8.5 1.5 V2 H10.8 Q12 2 12 3.2 V14.8 Q12 16 10.8 16 H1.2 Q0 16 0 14.8 V3.2 Q0 2 1.2 2 Z" fill="#3d9fd2"/><circle cx="6" cy="1.6" r="0.9" fill="#fff"/></svg>
<div class="a" style="left:306px;top:480.8px;font-size:12px;color:#222;letter-spacing:0px;font-weight:normal;">製作レビュー</div>
<div class="b" style="left:420px;top:485.7px;width:11px;height:11px;border-radius:2px;background:#bdbdbd"></div>
<div class="a" style="left:439px;top:480.8px;font-size:12px;color:#222;letter-spacing:0px;font-weight:normal;">未着手</div>
<div class="a" style="left:530px;top:480.5px;width:74px;text-align:right;font-size:13px;color:#222;letter-spacing:0.3px;-webkit-text-stroke:0">0</div>
<div class="b" style="left:624px;top:481.7px;width:16px;height:16px;border-radius:8px;background:#e58b7e"></div>
<div class="a" style="left:624px;top:482.7px;width:16px;height:14px;line-height:14px;text-align:center;font-size:10px;font-weight:bold;color:#fff;-webkit-text-stroke:0;opacity:0.9">岡</div>
<div class="a" style="left:647px;top:480.8px;font-size:12px;color:#222;letter-spacing:0px;font-weight:normal;">岡本 直哉</div>
<div class="b" style="left:206px;top:528px;width:705px;height:1px;background:#dedede"></div>
<svg style="left:287px;top:508.0px" width="12" height="16" viewBox="0 0 12 16"><path d="M1.2 2 H3.5 V1.5 Q3.5 0 5 0 H7 Q8.5 0 8.5 1.5 V2 H10.8 Q12 2 12 3.2 V14.8 Q12 16 10.8 16 H1.2 Q0 16 0 14.8 V3.2 Q0 2 1.2 2 Z" fill="#3d9fd2"/><circle cx="6" cy="1.6" r="0.9" fill="#fff"/></svg>
<div class="a" style="left:306px;top:505.8px;font-size:12px;color:#222;letter-spacing:0px;font-weight:normal;">指摘修正</div>
<div class="b" style="left:420px;top:510.7px;width:11px;height:11px;border-radius:2px;background:#bdbdbd"></div>
<div class="a" style="left:439px;top:505.8px;font-size:12px;color:#222;letter-spacing:0px;font-weight:normal;">未着手</div>
<div class="a" style="left:530px;top:505.5px;width:74px;text-align:right;font-size:13px;color:#222;letter-spacing:0.3px;-webkit-text-stroke:0">0</div>
<div class="b" style="left:206px;top:553px;width:705px;height:1px;background:#dedede"></div>
<svg style="left:254.7px;top:536.5px" width="4.5" height="8" viewBox="0 0 4.5 8"><path d="M0.6 0.6 L3.9 4.0 L0.6 7.4" fill="none" stroke="#555" stroke-width="1.3"/></svg>
<svg style="left:269px;top:533.0px" width="12" height="16" viewBox="0 0 12 16"><path d="M1.2 2 H3.5 V1.5 Q3.5 0 5 0 H7 Q8.5 0 8.5 1.5 V2 H10.8 Q12 2 12 3.2 V14.8 Q12 16 10.8 16 H1.2 Q0 16 0 14.8 V3.2 Q0 2 1.2 2 Z" fill="#3d9fd2"/><circle cx="6" cy="1.6" r="0.9" fill="#fff"/></svg>
<div class="a" style="left:288px;top:530.8px;font-size:12px;color:#222;letter-spacing:0px;font-weight:normal;">テスト</div>
<div class="b" style="left:420px;top:535.7px;width:11px;height:11px;border-radius:2px;background:#bdbdbd"></div>
<div class="a" style="left:439px;top:530.8px;font-size:12px;color:#222;letter-spacing:0px;font-weight:normal;">未着手</div>
<div class="a" style="left:530px;top:530.5px;width:74px;text-align:right;font-size:13px;color:#222;letter-spacing:0.3px;-webkit-text-stroke:0">0</div>
<div class="a" style="left:737.3px;top:530.5px;font-size:13px;color:#222;letter-spacing:0.62px;font-weight:normal;-webkit-text-stroke:0">2022/11/28</div>
<div class="a" style="left:830.8px;top:530.5px;font-size:13px;color:#222;letter-spacing:0.62px;font-weight:normal;-webkit-text-stroke:0">2022/12/05</div>
<div class="b" style="left:206px;top:578px;width:705px;height:1px;background:#dedede"></div>
<svg style="left:267px;top:558.0px" width="16" height="16" viewBox="0 0 16 16"><rect x="0" y="0" width="1.6" height="16" fill="#3d9fd2"/><path d="M2.6 0.8 Q6 -0.6 9 0.8 Q12 2.2 16 0.8 V11 Q12 12.4 9 11 Q6 9.6 2.6 11 Z" fill="#3d9fd2"/></svg>
<div class="a" style="left:288px;top:555.8px;font-size:12px;color:#222;letter-spacing:0px;font-weight:normal;">納入</div>
<div class="b" style="left:420px;top:560.7px;width:11px;height:11px;border-radius:2px;background:#bdbdbd"></div>
<div class="a" style="left:439px;top:555.8px;font-size:12px;color:#222;letter-spacing:0px;font-weight:normal;">未着手</div>
<div class="a" style="left:530px;top:555.5px;width:74px;text-align:right;font-size:13px;color:#222;letter-spacing:0.3px;-webkit-text-stroke:0">0</div>
<div class="a" style="left:737.3px;top:555.5px;font-size:13px;color:#222;letter-spacing:0.62px;font-weight:normal;-webkit-text-stroke:0">2022/12/14</div>
<div class="a" style="left:830.8px;top:555.5px;font-size:13px;color:#222;letter-spacing:0.62px;font-weight:normal;-webkit-text-stroke:0">2022/12/14</div>
<div class="b" style="left:206px;top:603px;width:705px;height:1px;background:#dedede"></div>
<svg style="left:254.7px;top:586.5px" width="4.5" height="8" viewBox="0 0 4.5 8"><path d="M0.6 0.6 L3.9 4.0 L0.6 7.4" fill="none" stroke="#555" stroke-width="1.3"/></svg>
<svg style="left:267px;top:584.0px" width="16" height="13.6" viewBox="0 0 16 13" preserveAspectRatio="none"><path d="M0 0.8 Q0 0 0.8 0 H6 L7.5 2 H15.2 Q16 2 16 2.8 V12.2 Q16 13 15.2 13 H0.8 Q0 13 0 12.2 Z" fill="#3d9fd2"/></svg>
<div class="a" style="left:288px;top:580.8px;font-size:12px;color:#222;letter-spacing:0px;font-weight:normal;">要求</div>
<div class="b" style="left:420px;top:585.7px;width:11px;height:11px;border-radius:2px;background:#2f3f9e"></div>
<div class="a" style="left:439px;top:580.8px;font-size:12px;color:#222;letter-spacing:0px;font-weight:normal;">作業中</div>
<div class="a" style="left:530px;top:580.5px;width:74px;text-align:right;font-size:13px;color:#999;letter-spacing:0.3px;-webkit-text-stroke:0">42</div>
<div class="a" style="left:737.3px;top:580.5px;font-size:13px;color:#999;letter-spacing:0.62px;font-weight:normal;-webkit-text-stroke:0">2022/09/12</div>
<div class="a" style="left:830.8px;top:580.5px;font-size:13px;color:#999;letter-spacing:0.62px;font-weight:normal;-webkit-text-stroke:0">2022/12/02</div>
<div class="b" style="left:206px;top:303px;width:705px;height:1px;background:#c3dbf0"></div>
<div class="b" style="left:409px;top:231px;width:1px;height:369px;background:#dedede"></div>
<div class="b" style="left:527px;top:231px;width:1px;height:369px;background:#dedede"></div>
<div class="b" style="left:614px;top:231px;width:1px;height:369px;background:#dedede"></div>
<div class="b" style="left:726px;top:231px;width:1px;height:369px;background:#dedede"></div>
<div class="b" style="left:820px;top:231px;width:1px;height:369px;background:#dedede"></div>
<div class="b" style="left:409.5px;top:303.5px;width:118.5px;height:25px;border:1.6px solid #2a7fd2"></div>
<svg style="left:520px;top:420px" width="13" height="20" viewBox="0 0 13 20"><path d="M0.6 0.5 V16.6 L4.6 12.9 L6.8 18 Q7.2 18.8 8 18.5 L8.7 18.1 Q9.4 17.7 9.1 17 L7 12 H12 Z" fill="#fff" stroke="#18222f" stroke-width="1.3" stroke-linejoin="round"/></svg>
</body>
</html>
